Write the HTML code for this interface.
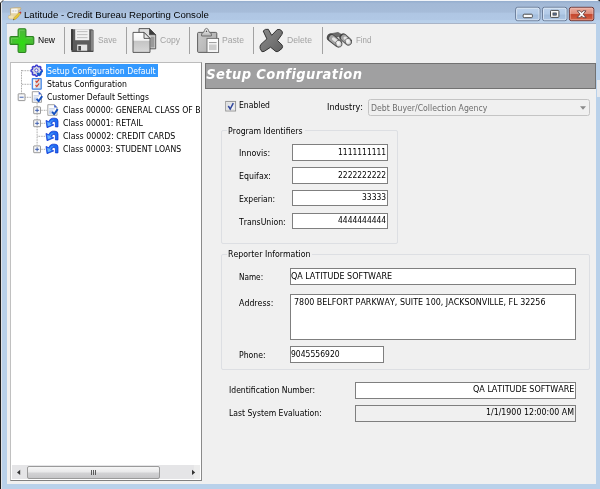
<!DOCTYPE html>
<html><head><meta charset="utf-8"><title>Latitude - Credit Bureau Reporting Console</title>
<style>
html,body{margin:0;padding:0;}
body{width:600px;height:489px;overflow:hidden;position:relative;background:#b9d1ea;font-family:'DejaVu Sans Condensed','DejaVu Sans',sans-serif;font-stretch:condensed;font-kerning:none;font-size:9px;color:#000;}
#win *{position:absolute;box-sizing:border-box;}
#win svg *{position:static;}
#win{position:absolute;left:0;top:0;width:600px;height:489px;overflow:hidden;will-change:transform;}
.t{white-space:nowrap;line-height:12px;height:12px;transform-origin:0 0;}
#titlebar{left:0;top:0;width:600px;height:24px;background:linear-gradient(#94adcd 0,#94adcd 1px,#a3b9d6 3.6px,#a6bcd9 12.2px,#afc6e3 13px,#b1c8e5 19.8px,#b9d0ea 20.6px,#bad1eb 24px);}
#client{left:6.8px;top:23.8px;width:589.2px;height:460.4px;background:#f0f0f0;}
.sep{width:1.3px;background:#a2a2a2;top:27.2px;height:27px;}
.inp{background:#fff;border:1px solid #7f7f7f;}
.grp{border:1px solid #dddfe3;border-radius:2px;}
.gcap{background:#f0f0f0;height:8px;}
</style></head><body>
<div id="win">
<div id="titlebar"></div>
<div style="left:6.4px;top:22.9px;width:590px;height:1.2px;background:#a9b4c7;"></div>
<div id="client"></div>

<!-- toolbar -->
<div class="sep" style="left:64px;"></div>
<div class="sep" style="left:126px;"></div>
<div class="sep" style="left:189px;"></div>
<div class="sep" style="left:253px;"></div>
<div class="sep" style="left:321.5px;"></div>

<!-- tree -->
<div id="tree" style="left:10px;top:62px;width:192.2px;height:419px;background:#fff;border-style:solid;border-color:#bcbcbc #8a8a8a #808080 #c0c0c0;border-width:1.6px 1.2px 1.1px 1.7px;"></div>
<div style="left:46px;top:64px;width:112px;height:13px;background:#3399ff;"></div>

<!-- header -->
<div style="left:204.8px;top:62.6px;width:391px;height:26.1px;background:#a0a0a1;border:1px solid #727272;"></div>
<div style="left:597.2px;top:79.5px;width:2.8px;height:17px;background:#e6e9ee;"></div>
<div class="t" id="hdr" style="left:206.3px;top:62.9px;height:22px;font:bold italic 14.5px/22px 'DejaVu Sans Condensed','DejaVu Sans',sans-serif;font-stretch:condensed;letter-spacing:0.4px;color:#fff;">Setup Configuration</div>

<!-- form -->
<div style="left:368px;top:98.5px;width:221.5px;height:17px;border:1px solid #c4c4c4;border-radius:2.5px;background:#f0f0f0;"></div>
<svg style="left:579.5px;top:105.5px;width:6px;height:4px" viewBox="0 0 6 4"><path d="M0 0.3 H6 L3 3.7 Z" fill="#8a8a8a"/></svg>

<div class="grp" style="left:221.25px;top:129.6px;width:176.45px;height:114.1px;"></div>
<div class="gcap" style="left:227px;top:126px;width:77.5px;"></div>
<div class="inp" style="left:292px;top:144px;width:96px;height:16.5px;"></div>
<div class="inp" style="left:292px;top:167px;width:96px;height:16.5px;"></div>
<div class="inp" style="left:292px;top:189.5px;width:96px;height:16.5px;"></div>
<div class="inp" style="left:292px;top:212.5px;width:96px;height:16.5px;"></div>

<div class="grp" style="left:221.25px;top:254.1px;width:368.95px;height:116.2px;"></div>
<div class="gcap" style="left:227px;top:250px;width:85.3px;"></div>
<div class="inp" style="left:290px;top:268px;width:286px;height:16.5px;"></div>
<div class="inp" style="left:290px;top:294px;width:286px;height:45.5px;"></div>
<div class="inp" style="left:290px;top:346px;width:94px;height:16.5px;"></div>

<div class="inp" style="left:355px;top:382px;width:221px;height:16.5px;"></div>
<div class="inp" style="left:355px;top:404.5px;width:221px;height:17px;background:#f0f0f0;"></div>

<!-- scrollbar -->
<div style="left:11.8px;top:465.4px;width:188.2px;height:13.8px;background:#e5e5e7;"></div>
<div style="left:193.5px;top:465.4px;width:6.5px;height:13.8px;background:#ececec;"></div>
<div style="left:27.2px;top:466.1px;width:132.6px;height:12.6px;border:1px solid #9a9a9a;border-radius:2px;background:linear-gradient(#f6f6f6 0,#e9e9ea 45%,#d2d2d4 55%,#c6c6c8 100%);"></div>
<div style="left:91.3px;top:469.6px;width:0.9px;height:5.6px;background:#5a5a5a;"></div>
<div style="left:93.1px;top:469.6px;width:0.9px;height:5.6px;background:#5a5a5a;"></div>
<div style="left:94.9px;top:469.6px;width:0.9px;height:5.6px;background:#5a5a5a;"></div>
<svg style="left:16px;top:468px;width:6px;height:9px" viewBox="0 0 6 9"><path d="M4.2 1.7 L1 4.4 L4.2 7.1 Z" fill="#333"/></svg>
<svg style="left:190px;top:468px;width:6px;height:9px" viewBox="0 0 6 9"><path d="M2 1.7 L5.2 4.4 L2 7.1 Z" fill="#333"/></svg>

<svg id="ico" style="left:0;top:0;width:600px;height:489px;" viewBox="0 0 600 489">
<defs>
<linearGradient id="gplus" x1="0" y1="0" x2="1" y2="1"><stop offset="0" stop-color="#5fb84a"/><stop offset="0.5" stop-color="#35d318"/><stop offset="1" stop-color="#3fae2b"/></linearGradient>
<radialGradient id="gplus2" cx="0.5" cy="0.6" r="0.5"><stop offset="0" stop-color="#2fdc12"/><stop offset="1" stop-color="#4db83a"/></radialGradient>
<linearGradient id="gpage" x1="0" y1="0" x2="0" y2="1"><stop offset="0" stop-color="#fff"/><stop offset="0.4" stop-color="#f4f4f4"/><stop offset="0.42" stop-color="#c4c4c4"/><stop offset="1" stop-color="#d8d8d8"/></linearGradient>
<linearGradient id="gclip2" x1="0" y1="0" x2="0" y2="1"><stop offset="0" stop-color="#f4f4f4"/><stop offset="1" stop-color="#b4b4b4"/></linearGradient>
<linearGradient id="gclip" x1="0" y1="0" x2="1" y2="0.6"><stop offset="0" stop-color="#cacaca"/><stop offset="1" stop-color="#b0b0b0"/></linearGradient>
<radialGradient id="glens" cx="0.45" cy="0.4" r="0.65"><stop offset="0" stop-color="#ffffff"/><stop offset="0.55" stop-color="#dcdcdc"/><stop offset="1" stop-color="#8a8a8a"/></radialGradient>
<linearGradient id="gx" x1="0" y1="0" x2="1" y2="1"><stop offset="0" stop-color="#888"/><stop offset="0.5" stop-color="#787878"/><stop offset="1" stop-color="#606060"/></linearGradient>
</defs>
<!-- plus -->
<path d="M19.3 28.7 h5.4 a1.2 1.2 0 0 1 1.2 1.2 v6.7 h6.7 a1.2 1.2 0 0 1 1.2 1.2 v5.4 a1.2 1.2 0 0 1 -1.2 1.2 h-6.7 v6.9 a1.2 1.2 0 0 1 -1.2 1.2 h-5.4 a1.2 1.2 0 0 1 -1.2 -1.2 v-6.9 h-6.9 a1.2 1.2 0 0 1 -1.2 -1.2 v-5.4 a1.2 1.2 0 0 1 1.2 -1.2 h6.9 v-6.7 a1.2 1.2 0 0 1 1.2 -1.2 z" fill="url(#gplus2)" stroke="#2c8420" stroke-width="1.1"/>
<path d="M19.5 36.8 v-6.6 h5 M11.6 43 v-4.8 h6.6 M26.4 37.9 h5.8" fill="none" stroke="#7fd86c" stroke-width="0.8" opacity="0.8"/>
<!-- save -->
<g>
<path d="M71 29.2 h21.3 l1.2 1.2 v21 h-21 l-1.5 -1.5 z" fill="#5c5c5c"/>
<rect x="71" y="29.2" width="2" height="21" fill="#3c3c3c"/>
<rect x="91" y="30.5" width="2.3" height="20.5" fill="#858585"/>
<rect x="75.2" y="29.2" width="14" height="11" fill="#f2f2f2"/>
<rect x="77" y="31.2" width="10.5" height="0.9" fill="#b8b8b8"/>
<rect x="77" y="34.2" width="10.5" height="0.9" fill="#b8b8b8"/>
<rect x="77" y="37.2" width="10.5" height="0.9" fill="#b8b8b8"/>
<rect x="77.2" y="44.6" width="10" height="6.8" fill="#e4e4e4"/>
<rect x="78.3" y="46" width="2.7" height="4.5" fill="#4a4a4a"/>
<rect x="71.5" y="50.8" width="21.8" height="1" fill="#333"/>
</g>
<!-- copy -->
<g stroke="#4c4c4c" stroke-width="0.9">
<path d="M139 28.6 h10.5 l6.2 6.2 v14 h-16.7 z" fill="#dedede"/>
<path d="M149.5 28.6 l6.2 6.2 h-6.2 z" fill="#3c3c3c"/>
<rect x="150.5" y="36.5" width="4" height="11" fill="#9a9a9a" stroke="none"/>
<path d="M133 32.4 h11 l6 6 v14 h-17 z" fill="url(#gpage)"/>
<path d="M144 32.4 l6 6 h-6 z" fill="#e8e8e8"/>
</g>
<!-- paste -->
<g stroke="#505050" stroke-width="0.9">
<rect x="197.6" y="32.4" width="19.2" height="20" rx="1" fill="url(#gclip)"/>
<path d="M201.6 36 V34 Q201.6 33 202.8 32.8 Q204 32.4 204.4 30.6 Q205 28.4 206.5 28.4 Q208 28.4 208.6 30.6 Q209 32.4 210.2 32.8 Q211.4 33 211.4 34 V36 Z" fill="url(#gclip2)" stroke="#666"/>
<circle cx="206.5" cy="31.2" r="0.7" fill="#444" stroke="none"/>
<rect x="207" y="38.4" width="11.6" height="14" fill="#fcfcfc" stroke="#6a6a6a"/>
<rect x="209" y="44.4" width="7.6" height="5.8" fill="#cdcdcd" stroke="none"/>
<rect x="209" y="42.2" width="7.6" height="0.9" fill="#8a8a8a" stroke="none"/>
</g>
<!-- delete X -->
<path d="M263.2 31 Q265 28.7 268.3 29.3 L271.7 35.3 L277.2 29.6 Q280 28.5 282.2 31.4 Q282.8 33 281.8 34.6 L277.5 40.6 L282 44.9 Q283.2 46.6 282 48.4 L278.8 51 Q277 52.2 275.7 51.4 L270.6 47.2 L264.5 51.2 Q262.8 52.1 261.7 51.4 L260.1 48.3 Q259.7 46 260.9 44.4 L266.9 38.9 Z" fill="url(#gx)" stroke="#333" stroke-width="1" stroke-linejoin="round"/>
<!-- binoculars -->
<g stroke-linecap="round" fill="none">
<path d="M329.8 34 L338 32.4 L343.6 35.6 L334 37.8 Z" fill="#6c6c6c" stroke="#4a4a4a" stroke-width="0.6"/>
<path d="M330.8 37.6 L338.2 43.4" stroke="#444" stroke-width="7.8"/>
<path d="M332 38.4 L338.2 43.4" stroke="#a4a4a4" stroke-width="6.2"/>
<path d="M333.4 38.8 L338.8 43" stroke="#e4e4e4" stroke-width="3"/>
<path d="M328.6 35.2 L328 38.6" stroke="#505050" stroke-width="1.8"/>
<path d="M343.2 37.2 L348 41.4" stroke="#444" stroke-width="7.6"/>
<path d="M344 37.8 L348 41.4" stroke="#a4a4a4" stroke-width="6"/>
<path d="M345 38 L348.6 41" stroke="#e4e4e4" stroke-width="3"/>
<ellipse cx="338.8" cy="43.7" rx="3" ry="3.5" fill="url(#glens)" stroke="#505050" stroke-width="0.6" transform="rotate(-25 338.8 43.7)"/>
<ellipse cx="348.3" cy="41.7" rx="3" ry="3.5" fill="url(#glens)" stroke="#505050" stroke-width="0.6" transform="rotate(-25 348.3 41.7)"/>
</g>

<!-- tree lines -->
<g stroke="#8a8a8a" stroke-width="0.9" stroke-dasharray="0.8 0.825" fill="none">
<path d="M21.5 70.2 V93.8"/><path d="M22 70.7 H30.6"/><path d="M22 84.3 H31"/><path d="M25.4 97.3 H31.4"/>
<path d="M37.1 103 V145.4"/><path d="M40.8 110.3 H46.8"/><path d="M40.8 123.3 H45.8"/><path d="M37.6 136.3 H45.8"/><path d="M40.8 149.3 H45.8"/>
</g>
<g transform="translate(21.6,97.2)"><rect x="-3.4" y="-3.4" width="6.8" height="6.8" rx="0.4" fill="#f8f8f8" stroke="#888" stroke-width="0.85"/>
<rect x="-2" y="-0.45" width="4" height="0.9" fill="#3355aa"/></g><g transform="translate(37.1,110.3)"><rect x="-3.4" y="-3.4" width="6.8" height="6.8" rx="0.4" fill="#f8f8f8" stroke="#888" stroke-width="0.85"/>
<rect x="-2" y="-0.45" width="4" height="0.9" fill="#3355aa"/><rect x="-0.45" y="-2" width="0.9" height="4" fill="#3355aa"/></g><g transform="translate(37.1,123.3)"><rect x="-3.4" y="-3.4" width="6.8" height="6.8" rx="0.4" fill="#f8f8f8" stroke="#888" stroke-width="0.85"/>
<rect x="-2" y="-0.45" width="4" height="0.9" fill="#3355aa"/><rect x="-0.45" y="-2" width="0.9" height="4" fill="#3355aa"/></g><g transform="translate(37.1,149.3)"><rect x="-3.4" y="-3.4" width="6.8" height="6.8" rx="0.4" fill="#f8f8f8" stroke="#888" stroke-width="0.85"/>
<rect x="-2" y="-0.45" width="4" height="0.9" fill="#3355aa"/><rect x="-0.45" y="-2" width="0.9" height="4" fill="#3355aa"/></g>
<path d="M36.05 65.23 L37.13 65.23 L37.90 66.39 L38.71 66.73 L40.08 66.44 L40.85 67.20 L40.56 68.57 L40.90 69.39 L42.07 70.15 L42.07 71.23 L40.91 72.00 L40.57 72.81 L40.86 74.18 L40.10 74.95 L38.73 74.66 L37.91 75.00 L37.15 76.17 L36.07 76.17 L35.30 75.01 L34.49 74.67 L33.12 74.96 L32.35 74.20 L32.64 72.83 L32.30 72.01 L31.13 71.25 L31.13 70.17 L32.29 69.40 L32.63 68.59 L32.34 67.22 L33.10 66.45 L34.47 66.74 L35.29 66.40 Z" fill="#d8dae2" stroke="#3f3fd0" stroke-width="1.5" stroke-linejoin="round"/>
<circle cx="36.4" cy="70.4" r="1.6" fill="#fff" stroke="#5050d4" stroke-width="1"/>
<path d="M37.4 72.8 l1.7 2.5 l3.2 -4.6" fill="none" stroke="#1256c8" stroke-width="2" stroke-linejoin="round"/>
<!-- checklist -->
<rect x="32.3" y="78.6" width="8.9" height="10.6" rx="0.5" fill="#dcdfe4" stroke="#3f82e4" stroke-width="1.2"/>
<rect x="33.4" y="79.6" width="1.6" height="8.5" fill="#f4f6f8"/>
<path d="M35.6 80.8 l1.2 1.5 l2.3 -3" fill="none" stroke="#d43a22" stroke-width="1.1"/>
<path d="M35.6 85 l1.2 1.5 l2.3 -3" fill="none" stroke="#d43a22" stroke-width="1.1"/>
<g transform="translate(31.8,91.3)">
<path d="M0.5 0.4 h6.6 l2.6 2.6 v8 h-9.2 z" fill="#fdfdfd" stroke="#8a8a8a" stroke-width="0.8"/>
<path d="M6.9 0.2 l3 3 h-3 z" fill="#3a5fd0"/>
<rect x="1.8" y="4.2" width="5.6" height="0.8" fill="#9fb4dc"/>
<rect x="1.8" y="6" width="4" height="3.6" fill="#c4d2ec"/>
<path d="M4.9 7.4 l1.9 2.6 l3.6 -5.2" fill="none" stroke="#1450c0" stroke-width="1.9" stroke-linejoin="round"/>
</g><g transform="translate(47.3,104.3)">
<path d="M0.5 0.4 h6.6 l2.6 2.6 v8 h-9.2 z" fill="#fdfdfd" stroke="#8a8a8a" stroke-width="0.8"/>
<path d="M6.9 0.2 l3 3 h-3 z" fill="#3a5fd0"/>
<rect x="1.8" y="4.2" width="5.6" height="0.8" fill="#9fb4dc"/>
<rect x="1.8" y="6" width="4" height="3.6" fill="#c4d2ec"/>
<path d="M4.9 7.4 l1.9 2.6 l3.6 -5.2" fill="none" stroke="#1450c0" stroke-width="1.9" stroke-linejoin="round"/>
</g>
<g transform="translate(0,0.09999999999999432)">
<path d="M58 126.8 L58 121 Q58 118.1 55 118.1 L52.6 118.1 Q50.4 118.1 48.6 121.5 L46 120.3 L47 127.6 L53.8 124.8 L51.5 123.3 Q52.6 121.1 54 121.2 Q55.4 121.4 55.4 123 L55.4 126.8 Z" fill="#1f6cf0" stroke="#0a2ed0" stroke-width="0.7" stroke-linejoin="round"/>
<path d="M47.2 122 L47.9 126.2 L51.6 124.6 L50 123.2 Q51.4 120.2 54 119.6 Q51.6 119.2 49.6 122.6 Z" fill="#6ab2ff"/>
</g><g transform="translate(0,13.099999999999994)">
<path d="M58 126.8 L58 121 Q58 118.1 55 118.1 L52.6 118.1 Q50.4 118.1 48.6 121.5 L46 120.3 L47 127.6 L53.8 124.8 L51.5 123.3 Q52.6 121.1 54 121.2 Q55.4 121.4 55.4 123 L55.4 126.8 Z" fill="#1f6cf0" stroke="#0a2ed0" stroke-width="0.7" stroke-linejoin="round"/>
<path d="M47.2 122 L47.9 126.2 L51.6 124.6 L50 123.2 Q51.4 120.2 54 119.6 Q51.6 119.2 49.6 122.6 Z" fill="#6ab2ff"/>
</g><g transform="translate(0,26.099999999999994)">
<path d="M58 126.8 L58 121 Q58 118.1 55 118.1 L52.6 118.1 Q50.4 118.1 48.6 121.5 L46 120.3 L47 127.6 L53.8 124.8 L51.5 123.3 Q52.6 121.1 54 121.2 Q55.4 121.4 55.4 123 L55.4 126.8 Z" fill="#1f6cf0" stroke="#0a2ed0" stroke-width="0.7" stroke-linejoin="round"/>
<path d="M47.2 122 L47.9 126.2 L51.6 124.6 L50 123.2 Q51.4 120.2 54 119.6 Q51.6 119.2 49.6 122.6 Z" fill="#6ab2ff"/>
</g>

<!-- window chrome -->
<defs>
<linearGradient id="gbtn" x1="0" y1="0" x2="0" y2="1"><stop offset="0" stop-color="#bdd2ec"/><stop offset="0.52" stop-color="#b2cae7"/><stop offset="0.56" stop-color="#a3bddc"/><stop offset="1" stop-color="#adc6e4"/></linearGradient>
<linearGradient id="gclose" x1="0" y1="0" x2="0" y2="1"><stop offset="0" stop-color="#ecb0a2"/><stop offset="0.5" stop-color="#dc8a78"/><stop offset="0.54" stop-color="#c4452c"/><stop offset="1" stop-color="#d4684c"/></linearGradient>
</defs>
<rect x="0" y="0" width="600" height="1" fill="#f2f5f9"/>
<rect x="0" y="2.5" width="1" height="487" fill="#1e1e1e"/>
<rect x="1" y="2" width="1" height="487" fill="#e0e3e8"/>
<path d="M0 0 H3.4 L0 3.2 Z" fill="#fbfbfb"/>
<path d="M0 3.4 L3.6 0" stroke="#2a2a2a" stroke-width="0.9" fill="none"/>
<path d="M597.5 0 H600 V1.6 Z" fill="#2a2a2a"/>
<!-- caption buttons -->
<g stroke-width="0.9">
<rect x="515.7" y="7.3" width="24.2" height="13.4" rx="2" fill="url(#gbtn)" stroke="#5a6c88"/>
<rect x="516.6" y="8.2" width="22.4" height="11.6" rx="1.3" fill="none" stroke="#e8f0fa" stroke-width="0.8" opacity="0.95"/>
<rect x="542.5" y="7.3" width="24.4" height="13.4" rx="2" fill="url(#gbtn)" stroke="#5a6c88"/>
<rect x="543.4" y="8.2" width="22.6" height="11.6" rx="1.3" fill="none" stroke="#e8f0fa" stroke-width="0.8" opacity="0.95"/>
<rect x="569.4" y="7.3" width="24.4" height="13.4" rx="2" fill="url(#gclose)" stroke="#5a2626"/>
<rect x="570.3" y="8.2" width="22.6" height="11.6" rx="1.3" fill="none" stroke="#f4c8be" stroke-width="0.7" opacity="0.8"/>
<rect x="523.2" y="14.2" width="9.2" height="3.5" rx="1" fill="#fbfbfb" stroke="#4a4a4a" stroke-width="1"/>
<rect x="550.5" y="10.4" width="8.4" height="7" rx="0.8" fill="#fbfbfb" stroke="#4a4a4a" stroke-width="1"/>
<rect x="552.9" y="12.9" width="3.6" height="2.3" fill="#5a6c8c" stroke="#3c3c3c" stroke-width="0.6"/>
<path d="M577.2 10.8 h3 l1.4 1.7 l1.4 -1.7 h3 l-2.8 3.4 l2.9 3.5 h-3.1 l-1.4 -1.8 l-1.4 1.8 h-3.1 l2.9 -3.5 z" fill="#fdfdfd" stroke="#5a3838" stroke-width="0.85" stroke-linejoin="round"/>
</g>
<!-- title icon -->
<g>
<path d="M10.4 8.4 Q15 7.2 20.6 7.6 Q21.4 8.8 20.2 10 L18.4 10.6 L18.6 16.6 Q17 19.4 13 19 L9 18.6 Q7.8 17.4 8.6 15.8 L10.6 15.4 Z" fill="#e6d5a4" stroke="#b8a070" stroke-width="0.6"/>
<rect x="11.2" y="8.6" width="6.4" height="4.6" fill="#f6f6f4"/>
<rect x="12.4" y="10" width="1.6" height="2" fill="#d8d8d8"/><rect x="14.8" y="10" width="1.8" height="2" fill="#dcdcdc"/>
<path d="M8.6 16 Q11 15 13.6 16.2 L13 18.8 L9 18.5 Q8 17.4 8.6 16 Z" fill="#f0e2b4"/>
<path d="M13.4 19.8 L14.2 17.6 L19.2 12.4 L20.8 13.8 L15.6 19.2 Z" fill="#e8c838" stroke="#a88a20" stroke-width="0.4"/>
<path d="M19.2 12.4 L20.2 11.6 Q21.4 11.8 21.4 13 L20.8 13.8 Z" fill="#c43030"/>
<path d="M13.2 20.2 L13.6 19 L14.4 19.7 Z" fill="#333"/>
</g>


<!-- checkbox -->
<defs><linearGradient id="gcb" x1="0" y1="0" x2="1" y2="1"><stop offset="0" stop-color="#dcdfe3"/><stop offset="1" stop-color="#fbfbfb"/></linearGradient></defs>
<rect x="225.7" y="101.4" width="9.9" height="9.6" fill="#f4f4f4" stroke="#8e8f8f" stroke-width="0.9"/>
<rect x="227.2" y="102.9" width="6.9" height="6.6" fill="url(#gcb)" stroke="#d2d4d6" stroke-width="0.6"/>
<path d="M228.3 106 L230.2 109 L233.3 103.2" fill="none" stroke="#31479c" stroke-width="1.5"/>

</svg>

<div class="t" style="left:24.2px;top:8.63px;font-size:9.7px;color:#000;transform:scaleX(0.9946);font-family:'Liberation Sans',sans-serif;font-stretch:normal;">Latitude - Credit Bureau Reporting Console</div>
<div class="t" style="left:38.0px;top:34.44px;font-size:9.1px;color:#000;transform:scaleX(0.9339);font-family:'Liberation Sans',sans-serif;font-stretch:normal;">New</div>
<div class="t" style="left:98.0px;top:34.44px;font-size:9.1px;color:#a2a2a2;transform:scaleX(0.9164);font-family:'Liberation Sans',sans-serif;font-stretch:normal;">Save</div>
<div class="t" style="left:160.0px;top:34.44px;font-size:9.1px;color:#a2a2a2;transform:scaleX(0.9419);font-family:'Liberation Sans',sans-serif;font-stretch:normal;">Copy</div>
<div class="t" style="left:222.4px;top:34.44px;font-size:9.1px;color:#a2a2a2;transform:scaleX(0.9456);font-family:'Liberation Sans',sans-serif;font-stretch:normal;">Paste</div>
<div class="t" style="left:287.0px;top:34.44px;font-size:9.1px;color:#a2a2a2;transform:scaleX(0.9507);font-family:'Liberation Sans',sans-serif;font-stretch:normal;">Delete</div>
<div class="t" style="left:355.6px;top:34.44px;font-size:9.1px;color:#a2a2a2;transform:scaleX(0.8699);font-family:'Liberation Sans',sans-serif;font-stretch:normal;">Find</div>
<div class="t" style="left:47.1px;top:64.91px;font-size:8.9px;color:#fff;transform:scaleX(0.9719);">Setup Configuration Default</div>
<div class="t" style="left:47.1px;top:77.91px;font-size:8.9px;color:#000;transform:scaleX(0.9727);">Status Configuration</div>
<div class="t" style="left:47.1px;top:90.91px;font-size:8.9px;color:#000;transform:scaleX(0.9633);">Customer Default Settings</div>
<div class="t" style="left:62.7px;top:103.91px;font-size:8.9px;color:#000;transform:scaleX(0.9721);">Class 00000: GENERAL CLASS OF B</div>
<div class="t" style="left:62.7px;top:116.91px;font-size:8.9px;color:#000;transform:scaleX(0.9745);">Class 00001: RETAIL</div>
<div class="t" style="left:62.7px;top:129.91px;font-size:8.9px;color:#000;transform:scaleX(0.9845);">Class 00002: CREDIT CARDS</div>
<div class="t" style="left:62.7px;top:142.91px;font-size:8.9px;color:#000;transform:scaleX(0.9699);">Class 00003: STUDENT LOANS</div>
<div class="t" style="left:238.6px;top:99.31px;font-size:8.9px;color:#000;transform:scaleX(0.9603);">Enabled</div>
<div class="t" style="left:327.0px;top:100.91px;font-size:8.9px;color:#000;transform:scaleX(1.0132);">Industry:</div>
<div class="t" style="left:370.6px;top:101.51px;font-size:8.9px;color:#6d6d6d;transform:scaleX(0.9732);">Debt Buyer/Collection Agency</div>
<div class="t" style="left:228.4px;top:124.51px;font-size:8.9px;color:#000;transform:scaleX(0.9730);">Program Identifiers</div>
<div class="t" style="left:239.2px;top:147.21px;font-size:8.9px;color:#000;transform:scaleX(0.9982);">Innovis:</div>
<div class="t" style="left:239.2px;top:169.91px;font-size:8.9px;color:#000;transform:scaleX(0.9841);">Equifax:</div>
<div class="t" style="left:239.2px;top:192.71px;font-size:8.9px;color:#000;transform:scaleX(0.9550);">Experian:</div>
<div class="t" style="left:239.2px;top:215.51px;font-size:8.9px;color:#000;transform:scaleX(0.9720);">TransUnion:</div>
<div class="t" style="left:337.7px;top:145.91px;font-size:8.9px;color:#000;transform:scaleX(0.9489);">1111111111</div>
<div class="t" style="left:337.7px;top:168.61px;font-size:8.9px;color:#000;transform:scaleX(0.9489);">2222222222</div>
<div class="t" style="left:361.8px;top:191.11px;font-size:8.9px;color:#000;transform:scaleX(0.9486);">33333</div>
<div class="t" style="left:337.7px;top:213.91px;font-size:8.9px;color:#000;transform:scaleX(0.9489);">4444444444</div>
<div class="t" style="left:228.4px;top:248.11px;font-size:8.9px;color:#000;transform:scaleX(0.9820);">Reporter Information</div>
<div class="t" style="left:239.2px;top:270.71px;font-size:8.9px;color:#000;transform:scaleX(0.9181);">Name:</div>
<div class="t" style="left:239.2px;top:297.11px;font-size:8.9px;color:#000;transform:scaleX(0.9853);">Address:</div>
<div class="t" style="left:239.2px;top:348.71px;font-size:8.9px;color:#000;transform:scaleX(0.9695);">Phone:</div>
<div class="t" style="left:291.3px;top:269.61px;font-size:8.9px;color:#000;transform:scaleX(1.0046);">QA LATITUDE SOFTWARE</div>
<div class="t" style="left:293.8px;top:295.61px;font-size:8.9px;color:#000;transform:scaleX(0.9989);">7800 BELFORT PARKWAY, SUITE 100, JACKSONVILLE, FL 32256</div>
<div class="t" style="left:291.4px;top:347.61px;font-size:8.9px;color:#000;transform:scaleX(0.9568);">9045556920</div>
<div class="t" style="left:229.2px;top:384.41px;font-size:8.9px;color:#000;transform:scaleX(0.9603);">Identification Number:</div>
<div class="t" style="left:229.2px;top:407.01px;font-size:8.9px;color:#000;transform:scaleX(0.9637);">Last System Evaluation:</div>
<div class="t" style="left:472.5px;top:383.01px;font-size:8.9px;color:#000;transform:scaleX(1.0075);">QA LATITUDE SOFTWARE</div>
<div class="t" style="left:485.9px;top:405.71px;font-size:8.9px;color:#000;transform:scaleX(0.9872);">1/1/1900 12:00:00 AM</div>
</div>
</body></html>
